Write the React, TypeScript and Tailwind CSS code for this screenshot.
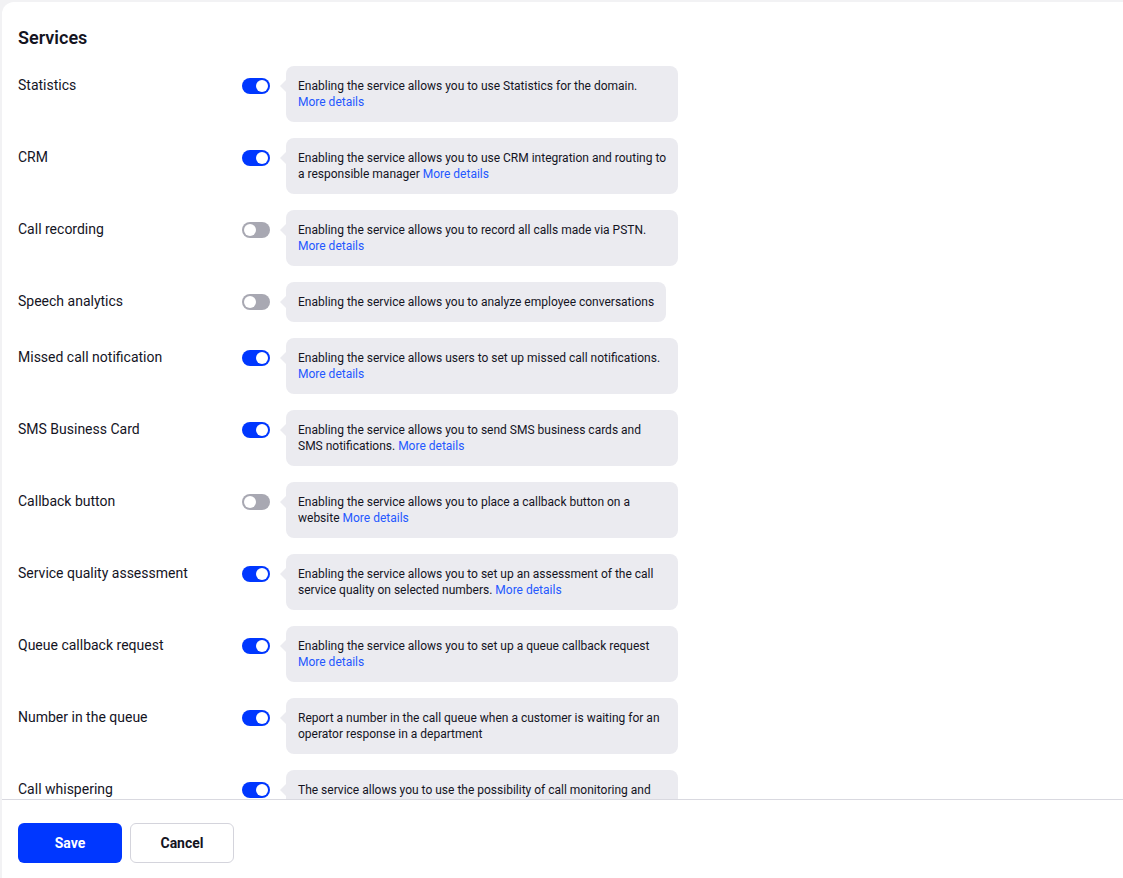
import React, { useState } from "react";

type Service = {
    name: string;
    text: string;
    link?: "inline" | "newline";
    enabled: boolean;
};

const services: Service[] = [
    { name: "Statistics", text: "Enabling the service allows you to use Statistics for the domain.", link: "newline", enabled: true },
    { name: "CRM", text: "Enabling the service allows you to use CRM integration and routing to a responsible manager", link: "inline", enabled: true },
    { name: "Call recording", text: "Enabling the service allows you to record all calls made via PSTN.", link: "newline", enabled: false },
    { name: "Speech analytics", text: "Enabling the service allows you to analyze employee conversations", enabled: false },
    { name: "Missed call notification", text: "Enabling the service allows users to set up missed call notifications.", link: "newline", enabled: true },
    { name: "SMS Business Card", text: "Enabling the service allows you to send SMS business cards and SMS notifications.", link: "inline", enabled: true },
    { name: "Callback button", text: "Enabling the service allows you to place a callback button on a website", link: "inline", enabled: false },
    { name: "Service quality assessment", text: "Enabling the service allows you to set up an assessment of the call service quality on selected numbers.", link: "inline", enabled: true },
    { name: "Queue callback request", text: "Enabling the service allows you to set up a queue callback request", link: "newline", enabled: true },
    { name: "Number in the queue", text: "Report a number in the call queue when a customer is waiting for an operator response in a department", enabled: true },
    { name: "Call whispering", text: "The service allows you to use the possibility of call monitoring and whispering to the operator during a call", enabled: true },
];

const Toggle = ({ on, onClick }: { on: boolean; onClick: () => void }) => (
    <button
        type="button"
        onClick={onClick}
        className={`mt-[12px] flex h-[16px] w-[28px] shrink-0 items-center rounded-full px-[2px] ${
            on ? "justify-end bg-[#0037ff]" : "justify-start bg-[#a8a8b2]"
        }`}
    >
        <span className="h-[12px] w-[12px] rounded-full bg-white" />
    </button>
);

const ServiceRow = ({ service, on, onToggle }: { service: Service; on: boolean; onToggle: () => void }) => (
    <div className="flex items-start">
        <div className="w-[224px] shrink-0 pt-[9px] text-[14px] leading-[20px] text-[#14141f]">{service.name}</div>
        <Toggle on={on} onClick={onToggle} />
        <div
            className={`relative ml-[16px] rounded-[8px] bg-[#ebebf0] py-[12px] pl-[12px] text-[12px] leading-[16px] text-[#14141f] ${
                service.link === "newline" ? "w-[392px] pr-[10px]" : "w-fit max-w-[392px] pr-[10px]"
            } ${service.link ? "" : "pr-[12px]"}`}
        >
            <span className="absolute left-[-6px] top-[14px] h-0 w-0 border-y-[6px] border-r-[6px] border-y-transparent border-r-[#ebebf0]" />
            {service.text}
            {service.link === "inline" && (
                <>
                    {" "}
                    <a href="#" className="text-[#2458ff]">More details</a>
                </>
            )}
            {service.link === "newline" && (
                <>
                    <br />
                    <a href="#" className="text-[#2458ff]">More details</a>
                </>
            )}
        </div>
    </div>
);

export default function App() {
    const [state, setState] = useState(services.map((s) => s.enabled));

    return (
        <div className="h-[878px] overflow-hidden bg-[#f2f2f4] pl-[2px] pt-[2px] font-['Roboto',sans-serif]">
            <div className="flex h-full flex-col rounded-tl-[12px] bg-white">
                <div className="flex-1 overflow-hidden px-[16px] pt-[24px]">
                    <h2 className="mb-[16px] text-[18px] font-semibold leading-[24px] text-[#14141f]">Services</h2>
                    <div className="flex flex-col gap-[16px]">
                        {services.map((s, i) => (
                            <ServiceRow
                                key={s.name}
                                service={s}
                                on={state[i]}
                                onToggle={() => setState((prev) => prev.map((v, j) => (j === i ? !v : v)))}
                            />
                        ))}
                    </div>
                </div>
                <div className="flex h-[79px] shrink-0 gap-[8px] border-t border-[#d9d9e0] px-[16px] pt-[23px]">
                    <button className="h-[40px] w-[104px] rounded-[6px] bg-[#0037ff] text-[14px] font-bold text-white">Save</button>
                    <button className="h-[40px] w-[104px] rounded-[6px] border border-[#d4d4dc] bg-white text-[14px] font-bold text-[#14141f]">
                        Cancel
                    </button>
                </div>
            </div>
        </div>
    );
}
